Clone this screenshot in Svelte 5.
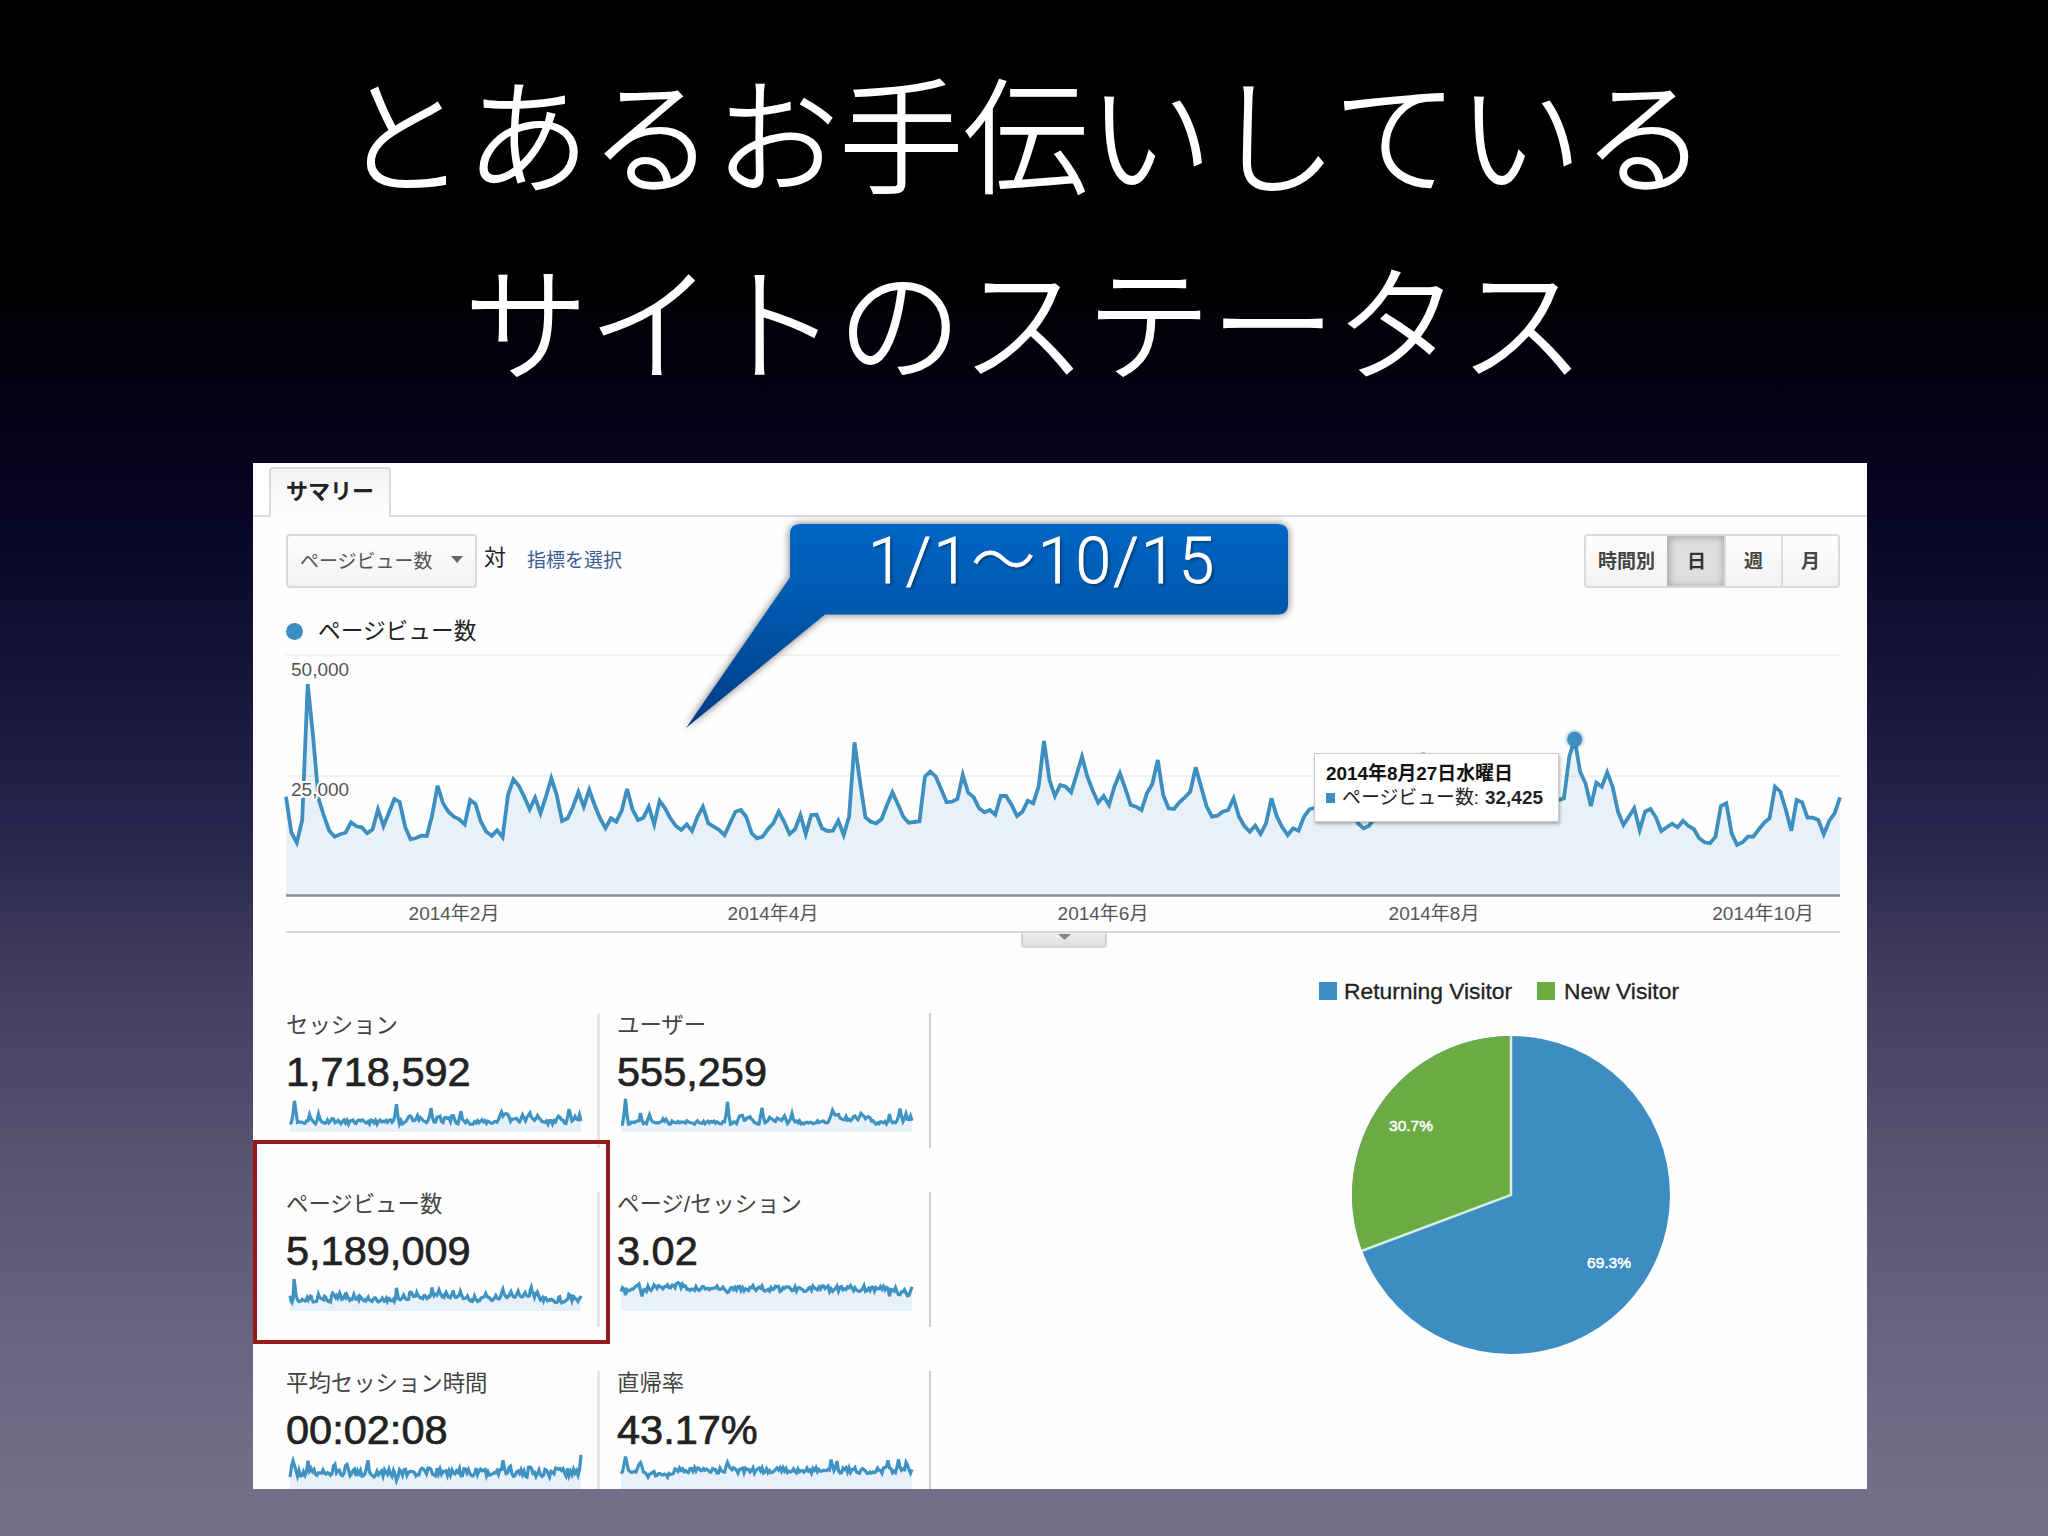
<script>
  // daily pageviews, 720 units = 50,000
  const pageviews = [
    295, 187, 157, 225, 633, 475, 290, 237, 193, 175, 182, 187, 218, 206, 203, 185, 197, 257, 207, 247,
    288, 279, 205, 167, 171, 178, 177, 240, 328, 275, 250, 235, 227, 212, 285, 273, 220, 190, 178, 194,
    173, 300, 347, 328, 295, 257, 292, 245, 295, 350, 300, 222, 230, 265, 309, 265, 315, 270, 230, 201,
    230, 220, 253, 318, 257, 225, 232, 265, 212, 283, 260, 230, 207, 195, 212, 192, 235, 265, 215, 205,
    195, 180, 215, 250, 255, 235, 185, 170, 175, 197, 215, 250, 220, 183, 197, 240, 183, 240, 241, 200,
    192, 193, 223, 180, 235, 458, 340, 233, 220, 215, 228, 270, 308, 272, 235, 217, 219, 221, 355, 370,
    355, 317, 278, 280, 288, 360, 307, 293, 260, 248, 255, 241, 297, 297, 270, 237, 250, 283, 275, 325,
    462, 345, 297, 330, 325, 308, 360, 415, 355, 313, 277, 297, 270, 325, 365, 320, 270, 265, 255, 305,
    333, 405, 300, 260, 258, 278, 293, 310, 383, 325, 267, 235, 238, 250, 255, 290, 235, 207, 190, 208,
    183, 215, 290, 235, 203, 180, 200, 193, 235, 257, 262, 270, 290, 340, 300, 270, 260, 250, 215, 200,
    207, 230, 260, 300, 260, 235, 228, 250, 300, 370, 426, 350, 300, 270, 260, 280, 300, 340, 380, 320,
    280, 270, 265, 300, 340, 390, 330, 290, 275, 270, 290, 330, 360, 310, 285, 285, 290, 415, 467, 370,
    335, 267, 337, 325, 368, 325, 250, 210, 235, 260, 195, 250, 258, 233, 192, 203, 214, 203, 223, 207,
    198, 170, 158, 155, 175, 267, 275, 185, 150, 158, 175, 175, 197, 217, 230, 325, 310, 255, 193, 285,
    278, 232, 232, 225, 182, 222, 245, 293
  ];

  const chartWidth = 1554;
  const chartHeight = 240;
  const selectedDay = 238;

  function linePoints(values, width, height, max) {
    const step = width / (values.length - 1);
    return values.map((v, i) => `${(i * step).toFixed(1)},${(height - (v / max) * height).toFixed(1)}`).join(' ');
  }

  const mainLine = linePoints(pageviews, chartWidth, chartHeight, 720);
  const selectedX = selectedDay * (chartWidth / (pageviews.length - 1));
  const selectedY = chartHeight - (pageviews[selectedDay] / 720) * chartHeight;

  const months = [
    { x: 168, text: '2014年2月' },
    { x: 487, text: '2014年4月' },
    { x: 817, text: '2014年6月' },
    { x: 1148, text: '2014年8月' },
    { x: 1477, text: '2014年10月' }
  ];

  // baseline with a little jitter, plus [position, height] peaks
  function spark(base, jitter, peaks, seed) {
    const out = [];
    let s = seed;
    for (let i = 0; i <= 194; i++) {
      s = (s * 16807) % 2147483647;
      let v = base + (s / 2147483647 - 0.5) * jitter;
      const x = i * 1.5;
      for (const [px, h, w = 1.6] of peaks) {
        const d = Math.abs(x - px) / w;
        if (d < 1.5) v += (h - base) * (1 - d / 1.5);
      }
      out.push(v);
    }
    return out;
  }

  const visitPeaks = [
    [4.5, 33], [19.5, 18], [28.5, 17], [42, 13, 4], [106.5, 29], [120, 18, 3], [128, 15, 3], [141, 24], [149, 15, 3],
    [157, 15, 3], [163, 18], [171, 19], [211.5, 20, 3], [217, 19, 3], [225, 15, 3], [233, 16, 3], [240, 18, 3],
    [247, 15, 4], [268.5, 18], [279, 23], [285, 17], [289.5, 15]
  ];

  const metrics = [
    { label: 'セッション', value: '1,718,592', data: spark(10, 4.5, visitPeaks, 11) },
    { label: 'ユーザー', value: '555,259', data: spark(9.5, 3.5, visitPeaks, 23) },
    { label: 'ページビュー数', value: '5,189,009', data: pageviews.map(v => (v / 633) * 31 + 0.8) },
    {
      label: 'ページ/セッション',
      value: '3.02',
      data: spark(22.5, 6, [[4.5, 17], [18, 29], [21, 16], [40, 25, 8], [56, 26, 8], [106.5, 16], [211.5, 18, 3], [268.5, 16], [279, 17, 3], [286.5, 15, 2]], 5)
    },
    {
      label: '平均セッション時間',
      value: '00:02:08',
      data: spark(17.5, 9, [[3, 25], [18, 27], [45, 24], [57, 24], [78, 27], [106.5, 12], [213, 29], [219, 25], [240, 26], [291, 31]], 37)
    },
    {
      label: '直帰率',
      value: '43.17%',
      data: spark(19.5, 6, [[4.5, 33], [19.5, 28], [28, 14, 6], [44, 14, 8], [106.5, 29], [210, 28], [216, 27], [267, 29], [277.5, 32], [285, 28]], 71)
    }
  ];

  const periods = ['時間別', '日', '週', '月'];
  let period = '日';

  const pieR = 159;
  const newShare = 0.307;
  const angle = -newShare * 2 * Math.PI;
  const edgeX = pieR + pieR * Math.sin(angle);
  const edgeY = pieR - pieR * Math.cos(angle);
</script>

<div class="slide">
  <h1 class="title">とあるお手伝いしている<br />サイトのステータス</h1>

  <div class="panel">
    <div class="tabs">
      <div class="tab">サマリー</div>
    </div>

    <div class="body">
      <div class="toolbar">
        <button class="select">
          ページビュー数
          <svg width="12" height="7" viewBox="0 0 12 7"><path d="M0 0H12L6 7Z" fill="#666" /></svg>
        </button>
        <span class="versus">対</span>
        <span class="link">指標を選択</span>
        <div class="periods">
          {#each periods as p}
            <button class="period" class:active={p === period} on:click={() => (period = p)}>{p}</button>
          {/each}
        </div>
      </div>

      <div class="series">
        <span class="dot"></span>
        <span class="series-name">ページビュー数</span>
      </div>

      <div class="chart">
        <svg width={chartWidth} height="276" viewBox="0 0 {chartWidth} 276">
          <path d="M0 0H1554M0 121H1554" stroke="#f3f1f4" stroke-width="2" />
          <polygon points="0,240 {mainLine} {chartWidth},240" fill="#3d8ec4" fill-opacity="0.115" />
          <polyline points={mainLine} class="line" />
          <path d="M0 240.5H1554" stroke="#8b8e96" stroke-width="2.5" />
          <text class="ylabel" x="5" y="21">50,000</text>
          <text class="ylabel" x="5" y="140.5">25,000</text>
          {#each months as m}
            <text class="xlabel" x={m.x} y="265">{m.text}</text>
          {/each}
          <circle class="marker" cx={selectedX} cy={selectedY} r="7.5" />
        </svg>
        <div class="tooltip">
          <div class="tip-date">2014年8月27日水曜日</div>
          <div class="tip-row"><i></i>ページビュー数: <b>32,425</b></div>
        </div>
      </div>
      <div class="handle">
        <svg width="13" height="6" viewBox="0 0 13 6"><path d="M0 0H13L6.5 6Z" fill="#85858a" /></svg>
      </div>

      <div class="lower">
        <div class="metrics">
          {#each metrics as m}
            <div class="metric">
              <div class="label">{m.label}</div>
              <div class="value">{m.value}</div>
              <svg class="spark" width="291" height="32" viewBox="0 0 291 32">
                <polygon points="0,32 {linePoints(m.data, 291, 32, 32)} 291,32" fill="#e8f1f9" />
                <polyline points={linePoints(m.data, 291, 32, 32)} />
              </svg>
            </div>
          {/each}
        </div>

        <div class="visitors">
          <div class="pie-legend">
            <i class="blue"></i><span>Returning Visitor</span>
            <i class="green"></i><span>New Visitor</span>
          </div>
          <svg class="pie" width="318" height="318" viewBox="0 0 318 318">
            <circle cx="159" cy="159" r="159" fill="#3d8dc3" />
            <path
              d="M159 159V0A159 159 0 0 0 {edgeX} {edgeY}Z"
              fill="#6cab44"
            />
            <path d="M159 0V159L{edgeX} {edgeY}" fill="none" stroke="#d6ecdf" stroke-width="2.5" />
            <text x="59" y="95">30.7%</text>
            <text x="257" y="232">69.3%</text>
          </svg>
        </div>
      </div>
    </div>

    <div class="highlight"></div>

    <div class="callout">
      <svg width="602" height="205" viewBox="0 0 602 205">
        <defs>
          <linearGradient id="calloutFill" x1="0" y1="0" x2="0" y2="1">
            <stop offset="0" stop-color="#0066c4" />
            <stop offset="0.44" stop-color="#0057ac" />
            <stop offset="1" stop-color="#003b86" />
          </linearGradient>
        </defs>
        <path
          d="M114 0H592Q602 0 602 10V80.5Q602 90.5 592 90.5H139L0 204L104 53.5V10Q104 0 114 0Z"
          fill="url(#calloutFill)"
        />
      </svg>
      <span class="range">1/1〜10/15</span>
    </div>
  </div>
</div>

<style>
  :global(body) {
    margin: 0;
    background: #000;
  }

  .slide {
    width: 2048px;
    height: 1536px;
    overflow: hidden;
    box-sizing: border-box;
    padding-top: 37px;
    background: linear-gradient(#000 0, #000 270px, #02010e 370px, #070522 500px, #131136 650px, #26244c 820px, #413d5f 980px, #565270 1150px, #686580 1340px, #757288 1536px);
    font-family: "Liberation Sans", "Noto Sans CJK JP", sans-serif;
    color: #222;
  }

  .title {
    height: 426px;
    margin: 0;
    text-align: center;
    color: #fff;
    font-family: "Noto Sans CJK JP", sans-serif;
    font-size: 124.5px;
    font-weight: 300;
    line-height: 187px;
    white-space: nowrap;
    -webkit-text-stroke: 1.8px #fff;
  }

  .panel {
    position: relative;
    width: 1614px;
    height: 1026px;
    margin-left: 253px;
    background: #fefefe;
  }

  .tabs {
    display: flex;
    align-items: flex-end;
    box-sizing: border-box;
    height: 54px;
    padding-left: 16px;
    border-bottom: 2px solid #dcdce0;
    background: #fff;
  }
  .tab {
    box-sizing: border-box;
    width: 122px;
    height: 50px;
    margin-bottom: -2px;
    border: 2px solid #d8d8de;
    border-bottom: none;
    border-radius: 4px 4px 0 0;
    background: linear-gradient(#f3f3f5, #fefefe);
    font-size: 22px;
    font-weight: 700;
    line-height: 45px;
    text-align: center;
  }

  .body {
    padding: 17px 27px 0 33px;
    height: 955px;
    overflow: hidden;
  }

  .toolbar {
    display: flex;
    height: 54px;
  }
  button {
    margin: 0;
    font-family: inherit;
  }
  .select {
    display: flex;
    align-items: center;
    justify-content: space-between;
    box-sizing: border-box;
    width: 191px;
    padding: 0 12px 4px 12px;
    border: 2px solid #d9d9dd;
    border-radius: 4px;
    background: linear-gradient(#fdfdfd, #f3f3f4);
    color: #555;
    font-size: 19px;
  }
  .versus {
    margin-left: 7px;
    font-size: 22px;
    line-height: 48px;
  }
  .link {
    margin-left: 21px;
    color: #3a5c94;
    font-size: 19px;
    line-height: 54px;
  }
  .periods {
    display: flex;
    margin-left: auto;
    box-sizing: border-box;
    border: 2px solid #d9d9dd;
    border-radius: 4px;
    overflow: hidden;
  }
  .period {
    width: 57px;
    padding: 0 0 4px;
    border: none;
    border-left: 2px solid #dcdcdf;
    background: linear-gradient(#fdfdfd, #f3f3f4);
    color: #444;
    font-size: 19px;
    font-weight: 700;
  }
  .period:first-child {
    width: 81px;
    border-left: none;
  }
  .period.active {
    border-left-color: #b8b8bb;
    background: #dedee0;
    box-shadow: inset 0 1px 8px rgba(0, 0, 0, 0.28);
    color: #333;
  }

  .series {
    display: flex;
    align-items: center;
    gap: 15px;
    height: 48px;
    margin-top: 19px;
    font-size: 22.7px;
  }
  .series-name {
    margin-bottom: 3px;
  }
  .dot {
    width: 17px;
    height: 17px;
    border-radius: 50%;
    background: #3d8ec4;
  }

  .chart {
    position: relative;
    height: 276px;
    border-bottom: 2px solid #d8d8db;
  }
  .chart svg {
    display: block;
    overflow: visible;
  }
  .line {
    fill: none;
    stroke: #3d8fc0;
    stroke-width: 3.8;
    stroke-linejoin: miter;
  }
  .ylabel {
    font-size: 19px;
    fill: #555;
    stroke: #fff;
    stroke-width: 4;
    paint-order: stroke;
  }
  .xlabel {
    font-size: 19px;
    fill: #555;
    text-anchor: middle;
  }
  .marker {
    fill: #3d8ec4;
    filter: drop-shadow(0 0 2px rgba(40, 90, 140, 0.7));
  }
  .tooltip {
    position: absolute;
    left: 1028px;
    top: 98px;
    box-sizing: border-box;
    width: 245px;
    height: 69px;
    padding: 7px 0 0 11px;
    border: 1px solid #ccc;
    background: #fff;
    box-shadow: 1px 2px 3px rgba(0, 0, 0, 0.3);
    color: #222;
    font-size: 18.9px;
    line-height: 25px;
    white-space: nowrap;
  }
  .tip-date {
    font-weight: 700;
    color: #111;
  }
  .tip-row {
    display: flex;
    align-items: center;
    margin-top: -1px;
  }
  .tip-row i {
    width: 9px;
    height: 10px;
    margin-right: 7px;
    background: #3d8ec4;
  }
  .tip-row b {
    margin-left: 6px;
  }

  .handle {
    display: flex;
    justify-content: center;
    box-sizing: border-box;
    width: 86px;
    height: 15px;
    margin: 0 0 0 735px;
    border: 2px solid #d4d4d7;
    border-top: none;
    border-radius: 0 0 4px 4px;
    background: linear-gradient(#efeff1, #dfdfe2);
  }
  .handle svg {
    margin-top: 1px;
  }

  .lower {
    display: flex;
  }
  .metrics {
    display: grid;
    grid-template-columns: 314px 314px;
    column-gap: 17px;
    row-gap: 44px;
    margin-top: 65px;
  }
  .metric {
    box-sizing: border-box;
    height: 135px;
    border-right: 3px solid #e5e5e9;
  }
  .metric:nth-child(2n) {
    border-right: 2px solid #cdcdd0;
  }
  .label {
    padding-top: 2px;
    font-size: 22.4px;
    line-height: 22px;
    white-space: nowrap;
    color: #444;
  }
  .value {
    margin-top: 14px;
    font-size: 41.5px;
    line-height: 42px;
    color: #222;
    -webkit-text-stroke: 0.7px #222;
  }
  .spark {
    display: block;
    margin: 7px 0 0 4px;
    overflow: visible;
  }
  .spark polyline {
    fill: none;
    stroke: #3f93c3;
    stroke-width: 3.2;
  }

  .visitors {
    margin: 32px 0 0 388px;
  }
  .pie-legend {
    display: flex;
    align-items: center;
    height: 22px;
    font-size: 22.8px;
    white-space: nowrap;
    -webkit-text-stroke: 0.3px #222;
  }
  .pie-legend i {
    width: 18px;
    height: 18px;
    margin-right: 7px;
  }
  .pie-legend .blue {
    background: #3d8dc3;
  }
  .pie-legend .green {
    margin: 0 9px 0 25px;
    background: #6cab44;
  }
  .pie {
    display: block;
    margin: 34px 0 0 33px;
  }
  .pie text {
    fill: #fff;
    stroke: #fff;
    stroke-width: 0.5;
    font-size: 15.5px;
    text-anchor: middle;
  }

  .highlight {
    position: absolute;
    left: 0;
    top: 677px;
    box-sizing: border-box;
    width: 357px;
    height: 204px;
    border: 4px solid #951a1a;
  }

  .callout {
    position: absolute;
    left: 433px;
    top: 60.5px;
  }
  .callout svg {
    display: block;
    overflow: visible;
    filter: drop-shadow(0 0 4px rgba(0, 0, 0, 0.55));
  }
  .range {
    position: absolute;
    left: 182px;
    top: -1px;
    color: #fff;
    font-family: Roboto, "Noto Sans CJK JP", sans-serif;
    font-size: 64px;
    font-weight: 300;
    line-height: 78px;
    letter-spacing: 2.3px;
    white-space: nowrap;
    -webkit-text-stroke: 0.8px #fff;
    text-shadow: 2px 2px 3px rgba(0, 0, 0, 0.4);
  }
</style>
